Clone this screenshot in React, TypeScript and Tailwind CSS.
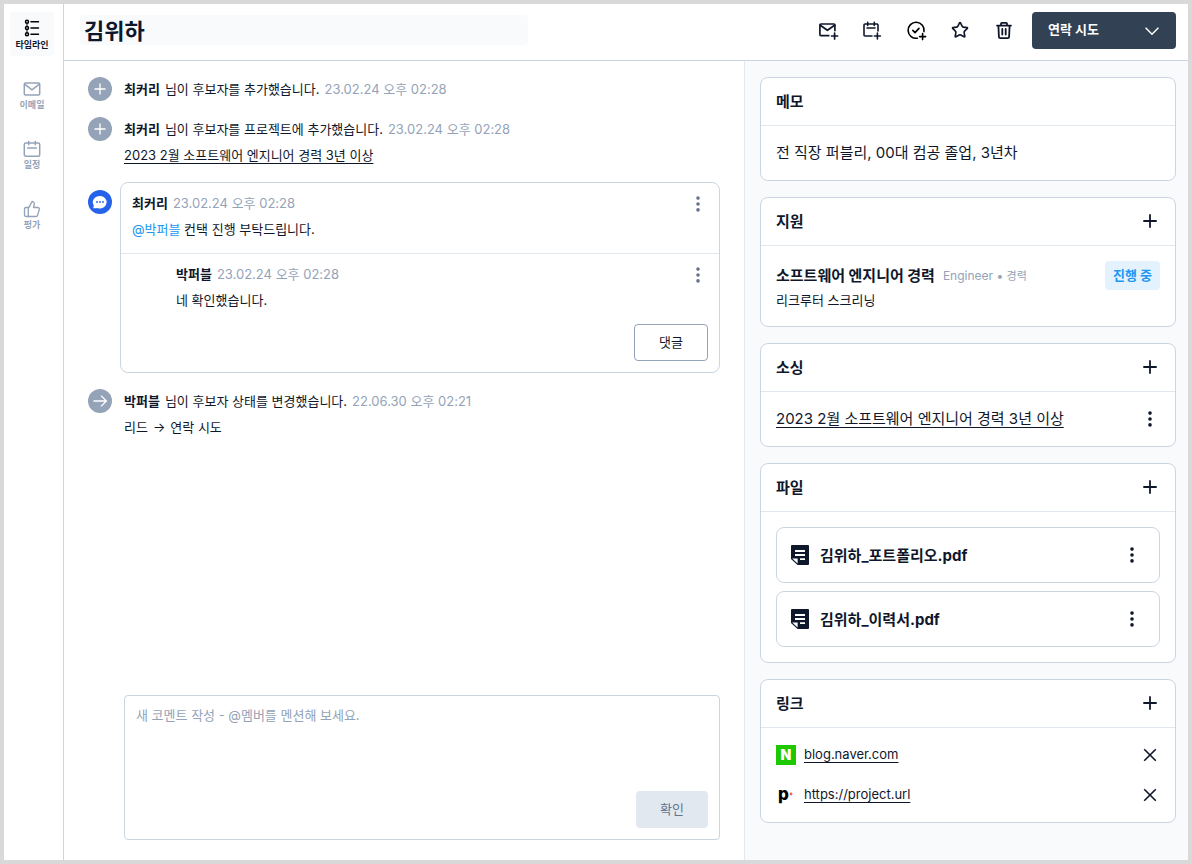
import { useState, type ReactNode } from "react";
import { Star, ThumbsUp } from "lucide-react";

type IconProps = { className?: string };

/* Icons */
function TimelineIcon() {
    return (
        <svg viewBox="0 0 20 20" className="h-5 w-5" fill="none" stroke="black" strokeWidth="1.5" strokeLinecap="round">
            <circle cx="5" cy="3.8" r="1.5" />
            <circle cx="5" cy="10" r="1.5" />
            <circle cx="5" cy="16.2" r="1.5" />
            <path d="M5 5.8v2.2M5 12v2.2" strokeWidth="1" />
            <path d="M9 3.8h7.5M9 10h7.5M9 16.2h7.5" />
        </svg>
    );
}

function MailIcon() {
    return (
        <svg viewBox="0 0 20 20" className="h-5 w-5" fill="none" stroke="currentColor" strokeWidth="1.5" strokeLinecap="round" strokeLinejoin="round">
            <rect x="2.3" y="5" width="15.4" height="12" rx="1.2" />
            <path d="M2.6 6.2 10 11.8l7.4-5.6" />
        </svg>
    );
}

function CalendarIcon() {
    return (
        <svg viewBox="0 0 20 20" className="h-5 w-5" fill="none" stroke="currentColor" strokeWidth="1.5" strokeLinecap="round" strokeLinejoin="round">
            <rect x="2.3" y="5" width="15.4" height="13.2" rx="1.5" />
            <path d="M6.7 3.4v3.4M13.3 3.4v3.4M5.6 10h8.8" />
        </svg>
    );
}

function MailPlusIcon() {
    return (
        <svg viewBox="0 0 24 24" className="h-6 w-6" fill="none" stroke="currentColor" strokeWidth="1.7" strokeLinecap="round" strokeLinejoin="round">
            <path d="M12.8 17.600H4.900a1 1 0 0 1-1-1V7a1 1 0 0 1 1-1h13a1 1 0 0 1 1 1v5.600" />
            <path d="m4.2 7.2 7.2 5.1 7.2-5.1M18.6 15v6M15.6 18h6" />
        </svg>
    );
}

function CalendarPlusIcon() {
    return (
        <svg viewBox="0 0 24 24" className="h-6 w-6" fill="none" stroke="currentColor" strokeWidth="1.6" strokeLinecap="round" strokeLinejoin="round">
            <path d="M12 18H5a1 1 0 0 1-1-1V7a1 1 0 0 1 1-1h12a1 1 0 0 1 1 1v6" />
            <path d="M7.7 4.4v3M14.3 4.4v3M7 10h8M17.4 15v6M14.4 18h6" />
        </svg>
    );
}

function CheckPlusIcon() {
    return (
        <svg viewBox="0 0 24 24" className="h-6 w-6" fill="none" stroke="black" strokeWidth="1.6" strokeLinecap="round" strokeLinejoin="round">
            <path d="M13.4 20.2A8 8 0 1 1 20 13.6" />
            <path d="m8.8 12.4 2.2 2.2 4-4.2M18.6 15.6v6M15.6 18.6h6" />
        </svg>
    );
}

function TrashIcon() {
    return (
        <svg viewBox="0 0 24 24" className="h-6 w-6" fill="none" stroke="currentColor" strokeWidth="1.8" strokeLinecap="round" strokeLinejoin="round">
            <path d="M5 7.6h14M9 7.4V5.7a.8.8 0 0 1 .8-.8h4.4a.8.8 0 0 1 .8.8v1.7" />
            <path d="m6.4 7.8.5 11.1a1.4 1.4 0 0 0 1.4 1.3h7.4a1.4 1.4 0 0 0 1.4-1.3l.5-11.1" />
            <path d="M10.3 11v5.600M13.7 11v5.600" />
        </svg>
    );
}

function PlusIcon() {
    return (
        <svg viewBox="0 0 20 20" className="h-5 w-5" fill="none" stroke="currentColor" strokeWidth="1.8">
            <path d="M10 3.3v13.4M3.3 10h13.4" />
        </svg>
    );
}

function CloseIcon() {
    return (
        <svg viewBox="0 0 20 20" className="h-5 w-5" fill="none" stroke="currentColor" strokeWidth="1.6">
            <path d="m4.2 4.2 11.6 11.6M15.8 4.2 4.2 15.8" />
        </svg>
    );
}

function DotsIcon() {
    return (
        <svg viewBox="0 0 20 20" className="h-5 w-5" fill="currentColor">
            <circle cx="10" cy="4.100" r="1.8" />
            <circle cx="10" cy="10" r="1.8" />
            <circle cx="10" cy="15.900" r="1.8" />
        </svg>
    );
}

function FileIcon() {
    return (
        <svg viewBox="0 0 20 20" className="h-5 w-5 shrink-0" fill="none">
            <path d="M2 0h16a1 1 0 0 1 1 1v18a1 1 0 0 1-1 1H7.600L1 13.900V1a1 1 0 0 1 1-1Z" fill="#0f172a" />
            <path d="M5 6h10M5 10h10M10 14.2h5" stroke="white" strokeWidth="1.800" />
            <path d="M2.200 13.400h5.400v5.200Z" fill="white" />
        </svg>
    );
}

function ChevronIcon({ className }: IconProps) {
    return (
        <svg viewBox="0 0 16 16" className={className} fill="none" stroke="currentColor" strokeWidth="1.5">
            <path d="m1.6 3.8 6.4 6.4 6.4-6.4" />
        </svg>
    );
}

function IconButton({ label, className = "", children }: { label: string; className?: string; children: ReactNode }) {
    return (
        <button type="button" aria-label={label} className={`shrink-0 cursor-pointer ${className}`}>
            {children}
        </button>
    );
}

/* Timeline */
function Marker({ type }: { type: "add" | "comment" | "move" }) {
    if (type === "comment") {
        return (
            <span className="mt-2 h-6 w-6 shrink-0 rounded-full bg-[#2563eb]">
                <svg viewBox="0 0 24 24" className="h-6 w-6">
                    <path d="M12 6a6.6 6.2 0 1 1-2.6 11.9c-1.2.5-2.9.5-4.3.2.7-1 .7-1.9.5-3A6.6 6.2 0 0 1 12 6Z" fill="white" />
                    <g fill="#2563eb">
                        <circle cx="9" cy="12" r=".9" />
                        <circle cx="12" cy="12" r=".9" />
                        <circle cx="15" cy="12" r=".9" />
                    </g>
                </svg>
            </span>
        );
    }
    return (
        <span className="h-6 w-6 shrink-0 rounded-full bg-[#94a3b8] text-white">
            <svg viewBox="0 0 24 24" className="h-6 w-6" fill="none" stroke="currentColor" strokeWidth="1.3">
                {type === "add" ? <path d="M12 6.5v11M6.5 12h11" /> : <path d="M5.5 12h13M13 6.6l5.4 5.4-5.4 5.4" />}
            </svg>
        </span>
    );
}

function Meta({ name, action, date }: { name: string; action?: string; date: string }) {
    return (
        <p className="flex h-6 items-center gap-[5px] pt-0.5 text-[13px] text-slate-900">
            <strong className="font-bold">{name}</strong>
            {action && <span>{action}</span>}
            <time className="text-[#94a3b8]">{date}</time>
        </p>
    );
}

function Comment({ name, date, children }: { name: string; date: string; children: ReactNode }) {
    return (
        <div className="flex items-start justify-between">
            <div>
                <Meta name={name} date={date} />
                <p className="mt-1 text-[13px] leading-[21px]">{children}</p>
            </div>
            <IconButton label="코멘트 메뉴" className="mt-[3px] text-[#64748b]">
                <DotsIcon />
            </IconButton>
        </div>
    );
}

/* Right panel */
function Card({ title, addable = true, children }: { title: string; addable?: boolean; children: ReactNode }) {
    return (
        <section className="rounded-lg border border-slate-300 bg-white">
            <div className="flex h-12 items-start justify-between border-b border-slate-200 px-[15px] pt-[13px]">
                <h2 className="text-[15px] leading-[22px] font-bold">{title}</h2>
                {addable && (
                    <IconButton label={`${title} 추가`}>
                        <PlusIcon />
                    </IconButton>
                )}
            </div>
            <div className="px-[15px] py-[15px]">{children}</div>
        </section>
    );
}

const tabs = [
    { label: "타임라인", icon: <TimelineIcon /> },
    { label: "이메일", icon: <MailIcon /> },
    { label: "일정", icon: <CalendarIcon /> },
    { label: "평가", icon: <ThumbsUp className="h-5 w-5 pt-0.5" strokeWidth={1.8} /> },
];

const files = ["김위하_포트폴리오.pdf", "김위하_이력서.pdf"];

const links = [
    {
        url: "blog.naver.com",
        logo: (
            <span className="flex h-5 w-5 items-center justify-center bg-[#1ec800] text-sm leading-5 font-black text-white">N</span>
        ),
    },
    {
        url: "https://project.url",
        logo: (
            <span className="flex h-5 w-5 items-center pb-0.5 pl-0.5 text-[17px] leading-5 font-extrabold text-black">
                p
                <svg viewBox="0 0 4 4" className="h-1 w-1">
                    <circle cx="2" cy="2" r="1.4" fill="#ff5a4a" />
                </svg>
            </span>
        ),
    },
];

export default function App() {
    const [active, setActive] = useState("타임라인");
    const [name, setName] = useState("김위하");

    return (
        <div lang="ko" className="flex min-h-screen bg-[#d9d9d9] p-1 font-['Inter','Noto_Sans_CJK_KR',sans-serif] text-slate-900">
            {/* Side tabs */}
            <nav className="flex w-[60px] shrink-0 flex-col gap-4 border-r border-slate-300 bg-white pt-2 pl-1.5">
                {tabs.map((tab) => (
                    <button
                        key={tab.label}
                        type="button"
                        onClick={() => setActive(tab.label)}
                        className={`flex h-11 w-11 cursor-pointer flex-col items-center rounded pt-1.5 text-[9px] leading-[14px] font-bold ${
                            active === tab.label ? "bg-slate-50 text-slate-900" : "text-[#94a3b8]"
                        }`}
                    >
                        {tab.icon}
                        {tab.label}
                    </button>
                ))}
            </nav>

            <div className="flex min-w-0 flex-1 flex-col bg-white">
                {/* Header */}
                <header className="flex h-[57px] items-center border-b border-slate-300 pr-3 pb-1 pl-4">
                    <input
                        aria-label="후보자 이름"
                        value={name}
                        onChange={(e) => setName(e.target.value)}
                        className="h-[30px] w-full max-w-[448px] min-w-0 rounded bg-slate-50 px-1 pt-0.5 text-[22px] font-bold"
                    />
                    <div className="mr-4 ml-auto flex shrink-0 items-center gap-5 pl-4">
                        <IconButton label="이메일 보내기">
                            <MailPlusIcon />
                        </IconButton>
                        <IconButton label="일정 추가">
                            <CalendarPlusIcon />
                        </IconButton>
                        <IconButton label="평가 추가">
                            <CheckPlusIcon />
                        </IconButton>
                        <IconButton label="즐겨찾기" className="flex h-6 w-6 items-center justify-center">
                            <Star className="h-[18px] w-[18px]" strokeWidth={2.2} />
                        </IconButton>
                        <IconButton label="삭제">
                            <TrashIcon />
                        </IconButton>
                    </div>
                    <div className="relative shrink-0">
                        <select
                            aria-label="후보자 상태"
                            defaultValue="연락 시도"
                            className="h-[37px] w-36 cursor-pointer appearance-none rounded bg-[#334155] px-4 text-[13px] font-bold text-white"
                        >
                            <option>리드</option>
                            <option>연락 시도</option>
                        </select>
                        <ChevronIcon className="pointer-events-none absolute top-3 right-4 h-4 w-4 text-white" />
                    </div>
                </header>

                <div className="flex flex-1">
                    {/* Timeline */}
                    <main className="flex min-w-0 flex-1 flex-col px-6 pt-4 pb-5">
                        <ol className="flex flex-col gap-4">
                            <li className="flex gap-3">
                                <Marker type="add" />
                                <Meta name="최커리" action="님이 후보자를 추가했습니다." date="23.02.24 오후 02:28" />
                            </li>
                            <li className="flex gap-3">
                                <Marker type="add" />
                                <div>
                                    <Meta name="최커리" action="님이 후보자를 프로젝트에 추가했습니다." date="23.02.24 오후 02:28" />
                                    <a href="#project" className="mt-1 block text-[13px] leading-[21px] underline underline-offset-[3px]">
                                        2023 2월 소프트웨어 엔지니어 경력 3년 이상
                                    </a>
                                </div>
                            </li>
                            <li className="flex gap-2">
                                <Marker type="comment" />
                                <div className="min-w-0 flex-1 rounded-lg border border-slate-300">
                                    <div className="border-b border-slate-200 px-[11px] pt-2 pb-[13px]">
                                        <Comment name="최커리" date="23.02.24 오후 02:28">
                                            <a href="#member" className="text-[#2196f3]">@박퍼블</a> 컨택 진행 부탁드립니다.
                                        </Comment>
                                    </div>
                                    <div className="px-[11px] pt-2 pb-[11px]">
                                        <div className="pl-11">
                                            <Comment name="박퍼블" date="23.02.24 오후 02:28">
                                                네 확인했습니다.
                                            </Comment>
                                        </div>
                                        <button
                                            type="button"
                                            className="mt-[13px] ml-auto block h-[37px] w-[74px] cursor-pointer rounded border border-[#94a3b8] text-[13px]"
                                        >
                                            댓글
                                        </button>
                                    </div>
                                </div>
                            </li>
                            <li className="flex gap-3">
                                <Marker type="move" />
                                <div>
                                    <Meta name="박퍼블" action="님이 후보자 상태를 변경했습니다." date="22.06.30 오후 02:21" />
                                    <p className="mt-1 flex gap-[5px] text-[13px] leading-[21px]">
                                        <span>리드</span>
                                        <span>→</span>
                                        <span>연락 시도</span>
                                    </p>
                                </div>
                            </li>
                        </ol>

                        <form
                            onSubmit={(e) => e.preventDefault()}
                            className="mt-auto ml-9 flex flex-col rounded border border-slate-300 p-[11px]"
                        >
                            <textarea
                                aria-label="새 코멘트"
                                placeholder="새 코멘트 작성 - @멤버를 멘션해 보세요."
                                className="h-[84px] resize-none text-[13px] leading-4 outline-none placeholder:text-[#94a3b8]"
                            />
                            <button type="submit" className="h-[37px] w-[72px] cursor-pointer self-end rounded bg-slate-200 text-[13px] text-[#64748b]">
                                확인
                            </button>
                        </form>
                    </main>

                    {/* Candidate info */}
                    <aside className="flex w-[444px] shrink-0 flex-col gap-4 border-l border-slate-200 bg-slate-50 pt-4 pr-3 pb-5 pl-[15px]">
                        <Card title="메모" addable={false}>
                            <p className="text-[15px] leading-6">전 직장 퍼블리, 00대 컴공 졸업, 3년차</p>
                        </Card>

                        <Card title="지원">
                            <div className="flex items-start justify-between">
                                <div>
                                    <div className="flex items-center gap-2">
                                        <h3 className="text-[15px] leading-[30px] font-bold">소프트웨어 엔지니어 경력</h3>
                                        <p className="text-xs text-[#94a3b8]">
                                            Engineer • <span className="text-[11px]">경력</span>
                                        </p>
                                    </div>
                                    <p className="pb-0.5 text-[13px] leading-[18px]">리크루터 스크리닝</p>
                                </div>
                                <span className="rounded bg-[#e3f2fd] px-2 text-[13px] leading-[29px] font-bold text-[#2196f3]">진행 중</span>
                            </div>
                        </Card>

                        <Card title="소싱">
                            <div className="flex h-6 items-center justify-between">
                                <a href="#project" className="text-[15px] leading-6 underline underline-offset-[3px]">
                                    2023 2월 소프트웨어 엔지니어 경력 3년 이상
                                </a>
                                <IconButton label="소싱 메뉴">
                                    <DotsIcon />
                                </IconButton>
                            </div>
                        </Card>

                        <Card title="파일">
                            <ul className="flex flex-col gap-2">
                                {files.map((file) => (
                                    <li key={file} className="flex h-14 items-center gap-2.5 rounded-lg border border-slate-300 pr-[17px] pl-[13px]">
                                        <FileIcon />
                                        <span className="pt-0.5 text-[15px] font-bold">{file}</span>
                                        <IconButton label={`${file} 메뉴`} className="ml-auto">
                                            <DotsIcon />
                                        </IconButton>
                                    </li>
                                ))}
                            </ul>
                        </Card>

                        <Card title="링크">
                            <ul className="flex flex-col gap-4">
                                {links.map((link) => (
                                    <li key={link.url} className="flex h-6 items-center gap-2">
                                        {link.logo}
                                        <a href={`#${link.url}`} className="text-[13px] underline underline-offset-[3px]">
                                            {link.url}
                                        </a>
                                        <IconButton label={`${link.url} 삭제`} className="ml-auto">
                                            <CloseIcon />
                                        </IconButton>
                                    </li>
                                ))}
                            </ul>
                        </Card>
                    </aside>
                </div>
            </div>
        </div>
    );
}
